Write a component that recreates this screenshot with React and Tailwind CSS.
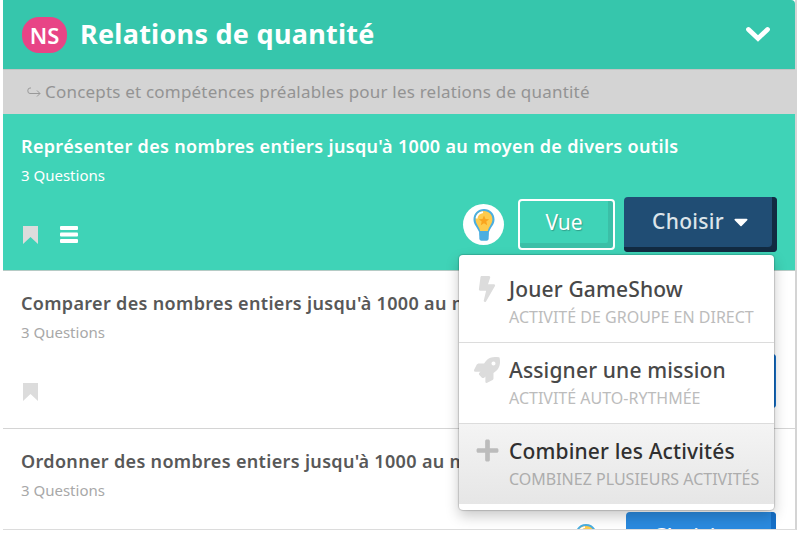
import { FaBolt, FaRocket, FaPlus, FaCaretDown } from "react-icons/fa";

const menuItems = [
  { icon: FaBolt, title: "Jouer GameShow", text: "Activité de groupe en direct" },
  { icon: FaRocket, title: "Assigner une mission", text: "Activité auto-rythmée" },
  { icon: FaPlus, title: "Combiner les Activités", text: "Combinez plusieurs activités", active: true },
];

function Bookmark() {
  return (
    <svg width="15" height="18" viewBox="0 0 15 18" fill="#dcdcdc">
      <path d="M0 0h15v18l-7.5-7L0 18z" />
    </svg>
  );
}

function Bulb() {
  return (
    <span className="flex h-[41px] w-[41px] shrink-0 items-center justify-center rounded-full bg-white">
      <svg width="22" height="32" viewBox="0 0 22 32">
        <path d="M11 0C5 0 .5 4.500 .5 10.500c0 5 3.300 7 5.300 12h10.400c2-5 5.300-7 5.300-12C21.500 4.500 17 0 11 0z" fill="#4baee0" />
        <path d="M11 2c-5 0-8.400 3.700-8.400 8.400 0 4.400 3.400 6.600 4.600 11.600h7.600c1.200-5 4.600-7.200 4.600-11.600C19.400 5.700 16 2 11 2z" fill="#fdcb4d" />
        <path d="M3.500 9.500C4 6 6.500 3.800 10 3.200" fill="none" stroke="#fff" strokeWidth="1.800" />
        <path d="M11 6.500l1.500 3.400 3.700.3-2.900 2.400.9 3.700-3.200-2-3.200 2 .9-3.700-2.900-2.400 3.700-.3z" fill="#f9a51f" />
        <path d="M6 22h10l-.4 8q-.2 1.800-2 1.800H8.400q-1.800 0-2-1.800z" fill="#4baee0" />
      </svg>
    </span>
  );
}

function Menu() {
  return (
    <div className="absolute top-[64px] right-[3px] z-10 h-[255px] w-[315px] rounded-[4px] bg-white pt-[7px] font-normal shadow-[0_0_1px_1px_rgba(0,0,0,0.16),0_6px_14px_rgba(0,0,0,0.22)]">
      {menuItems.map(({ icon: Icon, title, text, active }) => (
        <div
          key={title}
          className={
            active
              ? "flex h-[80px] bg-linear-to-b from-[#f4f4f4] to-[#e6e6e6] pt-[11px] text-[#303030]"
              : "flex h-[81px] border-b border-[#dcdcdc] pt-[11px] text-[#484848]"
          }
        >
          <div className="flex w-[50px] shrink-0 justify-center pt-[3px] pl-[6px]">
            <Icon className={active ? "h-[25px] w-[25px] text-[#bcbcbc]" : "h-[26px] w-[26px] text-[#dcdcdc]"} />
          </div>
          <div className="whitespace-nowrap">
            <div className="text-[21px] leading-[32px] font-medium tracking-[0.15px]">{title}</div>
            <div className={active ? "text-[16px] leading-[24px] text-[#adadad] uppercase" : "text-[16px] leading-[24px] text-[#bcbcbc] uppercase"}>
              {text}
            </div>
          </div>
        </div>
      ))}
    </div>
  );
}

function Row({ title, selected, covered }) {
  return (
    <div
      className={
        selected
          ? "relative z-10 flex h-[157px] flex-col border-b border-[#b5cbc5] bg-[#3fd3b7] text-white"
          : "flex h-[158px] flex-col border-b border-[#d4d4d4] bg-white text-[#585858]"
      }
    >
      <div className="px-[18px] pt-[17px] whitespace-nowrap">
        <div className="text-[18px] leading-[30px] font-semibold tracking-[0.33px]">{title}</div>
        <div className={selected ? "mb-[2px] text-[15px] leading-[28px]" : "mb-[2px] text-[15px] leading-[28px] text-[#a8a8a8]"}>
          3 Questions
        </div>
      </div>
      <div className="flex pr-[18px] pl-[20px]">
        <div className="flex grow gap-[22px] pt-[35px]">
          <Bookmark />
          {selected && (
            <svg width="18" height="17" viewBox="0 0 18 17" fill="#fff">
              <rect width="18" height="4" rx="1" />
              <rect y="6.500" width="18" height="4" rx="1" />
              <rect y="13" width="18" height="4" rx="1" />
            </svg>
          )}
        </div>
        <div className="relative flex pt-[6px]">
          <div className={selected ? "pt-[7px] pr-[14px]" : "pt-[7px] pr-[20px]"}>
            <Bulb />
          </div>
          {selected && (
            <button className="mt-[2px] mr-[9px] h-[51px] w-[97px] rounded-[4px] border-2 border-white pr-[5px] pb-[6px] text-[21px] leading-[30px] shadow-[inset_-5px_-5px_0_#3bbfa7] text-shadow-[1px_1px_1px_rgba(0,0,0,0.25)]">
              Vue
            </button>
          )}
          <button
            className={
              selected
                ? "flex h-[55px] w-[153px] items-center justify-center gap-[10px] rounded-[4px] bg-[#204d74] pr-[1px] pb-[5px] text-[21px] font-medium tracking-[0.3px] text-[#dce4ea] shadow-[inset_-5px_-5px_0_#122b42]"
                : "mr-[1px] flex h-[54px] w-[150px] items-center justify-center gap-[10px] rounded-[4px] bg-[#2a8adf] pb-[5px] text-[21px] font-medium tracking-[0.3px] text-white shadow-[inset_-5px_-5px_0_#1670c8]"
            }
          >
            {!covered && "Choisir"}
            {!covered && <FaCaretDown className="mb-[2px] h-[23px] w-[14px] text-white" preserveAspectRatio="none" />}
          </button>
          {selected && <Menu />}
        </div>
      </div>
    </div>
  );
}

function App() {
  return (
    <div className="h-[535px] overflow-hidden bg-white pl-[3px] font-['Noto_Sans',sans-serif]">
      <div className="h-[530px] w-[794px] overflow-hidden border-r-2 border-b border-[#dcdcdc] border-r-[#d4d4d4]">
        <div className="flex h-[69px] items-center rounded-tr-[4px] bg-[#36c6ac] pr-[24px] pb-px pl-[19px] text-white">
          <div className="mt-[2px] flex h-[36px] w-[45px] items-center justify-center rounded-[17px] bg-[#e84486] text-[22px] font-semibold">
            NS
          </div>
          <h1 className="ml-[13px] grow text-[27px] font-bold tracking-[0.27px] whitespace-nowrap">Relations de quantité</h1>
          <svg width="26" height="17" viewBox="0 0 26 17" fill="none" stroke="#fff" strokeWidth="4.800" strokeLinecap="round">
            <path d="M3.500 3.500L13 12.500L22.500 3.500" />
          </svg>
        </div>
        <div className="flex h-[45px] items-center gap-[4px] border-t border-[#c4c4c4] bg-[#d4d4d4] pl-[24px] text-[17px] tracking-[0.2px] whitespace-nowrap text-[#939393]">
          <svg width="14" height="11" viewBox="0 0 14 11" fill="none" stroke="#999" strokeWidth="1">
            <path d="M4 1H3a2 2.500 0 0 0 0 5.500h10M10 3.500l3 3-3 3" />
          </svg>
          <span>Concepts et compétences préalables pour les relations de quantité</span>
        </div>
        <Row title="Représenter des nombres entiers jusqu'à 1000 au moyen de divers outils" selected />
        <Row title="Comparer des nombres entiers jusqu'à 1000 au m" covered />
        <Row title="Ordonner des nombres entiers jusqu'à 1000 au m" />
      </div>
    </div>
  );
}

export default App;
